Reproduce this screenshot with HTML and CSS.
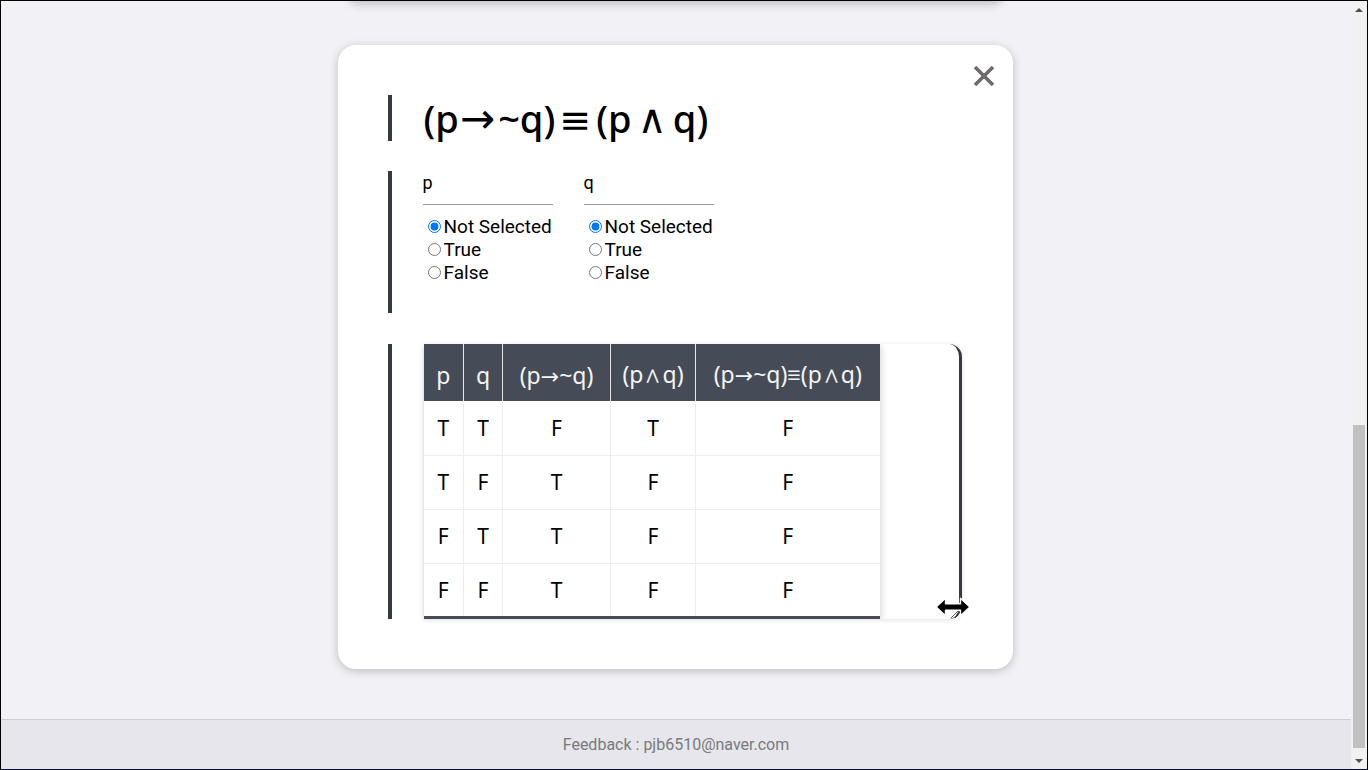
FILE: index.html
```html
<!DOCTYPE html>
<html lang="ko">
<head>
<meta charset="utf-8">
<title>Truth table</title>
<link rel="stylesheet" href="styles.css">
</head>
<body>
<div class="frame">
  <main class="page">
    <div class="prev-card"></div>
    <section class="card">
      <button class="close" aria-label="close">
        <svg width="22" height="22" viewBox="0 0 22 22"><path d="M2 2 L20 20 M20 2 L2 20" stroke="#6f6b6b" stroke-width="3.6" stroke-linecap="butt"/></svg>
      </button>
      <div class="block heading-block">
        <h1 class="formula">(p<span class="sym arrow">→</span>~q)<span class="sym equiv">≡</span>(p<span class="sym and">∧</span>q)</h1>
      </div>
      <div class="block vars">
        <div class="var">
          <div class="var-name">p</div>
          <div class="opts">
            <label class="opt"><input type="radio" name="p" checked>Not Selected</label>
            <label class="opt"><input type="radio" name="p">True</label>
            <label class="opt"><input type="radio" name="p">False</label>
          </div>
        </div>
        <div class="var">
          <div class="var-name">q</div>
          <div class="opts">
            <label class="opt"><input type="radio" name="q" checked>Not Selected</label>
            <label class="opt"><input type="radio" name="q">True</label>
            <label class="opt"><input type="radio" name="q">False</label>
          </div>
        </div>
      </div>
      <div class="block table-block">
        <div class="table-wrap">
          <table class="truth">
            <thead>
              <tr><th>p</th><th>q</th><th>(p<span class="hsym">→</span>~q)</th><th>(p∧q)</th><th>(p<span class="hsym">→</span>~q)≡(p∧q)</th></tr>
            </thead>
            <tbody>
              <tr><td>T</td><td>T</td><td>F</td><td>T</td><td>F</td></tr>
              <tr><td>T</td><td>F</td><td>T</td><td>F</td><td>F</td></tr>
              <tr><td>F</td><td>T</td><td>T</td><td>F</td><td>F</td></tr>
              <tr><td>F</td><td>F</td><td>T</td><td>F</td><td>F</td></tr>
            </tbody>
          </table>
        </div>
        <svg class="cursor" width="36" height="20" viewBox="0 0 36 20">
          <path d="M1.2 10 L10.5 1.2 L10.5 6.8 L25.5 6.8 L25.5 1.2 L34.8 10 L25.5 18.8 L25.5 13.2 L10.5 13.2 L10.5 18.8 Z" fill="#000" stroke="#fff" stroke-width="1.4" stroke-linejoin="round"/>
        </svg>
      </div>
    </section>
    <footer class="footer">Feedback : pjb6510@naver.com</footer>
  </main>
  <div class="scrollbar">
    <div class="sb-btn"><span class="tri up"></span></div>
    <div class="sb-track"><div class="sb-thumb"></div></div>
    <div class="sb-btn"><span class="tri down"></span></div>
  </div>
</div>
</body>
</html>
```

FILE: styles.css
```css
* { box-sizing: border-box; }
html, body { margin: 0; padding: 0; }
body { background: #f1f1f6; overflow: hidden; }

.frame {
  width: 1368px;
  height: 770px;
  border: 1px solid #000;
  border-bottom-color: #0b0b40;
  display: flex;
  overflow: hidden;
}

.page {
  width: 1350px;
  display: flex;
  flex-direction: column;
  align-items: center;
  background: #f1f1f6;
  font-family: Roboto, "Noto Sans", sans-serif;
}

.prev-card {
  width: 655px;
  height: 10px;
  margin-top: -10px;
  margin-right: 2px;
  background: #fff;
  border-radius: 0 0 18px 18px;
  box-shadow: 0 3px 10px rgba(0,0,0,0.22);
  flex: none;
}

.card {
  position: relative;
  width: 675px;
  margin-top: 44px;
  margin-right: 2px;
  background: #fff;
  border-radius: 18px;
  box-shadow: 0 2px 10px rgba(0,0,0,0.22);
  padding: 50px 50px 50px 50px;
  display: flex;
  flex-direction: column;
  gap: 30px;
  flex: none;
}

.close {
  position: absolute;
  top: 20px;
  right: 18px;
  width: 22px;
  height: 22px;
  padding: 0;
  border: 0;
  background: none;
  display: flex;
}

.block {
  border-left: 4px solid #343a40;
  padding-left: 31px;
}

.heading-block { height: 46px; }

.formula {
  margin: 0 0 0 1px;
  font-family: "Noto Sans", "Open Sans", sans-serif;
  font-weight: 500;
  font-size: 38px;
  line-height: 46px;
  color: #000;
  white-space: nowrap;
}

.sym {
  font-family: "DejaVu Sans", sans-serif;
  font-weight: 400;
}

.sym.arrow { font-size: 42px; margin: 0 3px 0 1px; }
.sym.equiv { margin: 0 5px 0 4px; }
.sym.and { margin: 0 6px 0 6px; font-size: 40px; }

.vars {
  display: flex;
  gap: 31px;
  padding-bottom: 29px;
}

.var { width: 130px; }

.var-name {
  font-size: 18px;
  line-height: 24px;
  padding-bottom: 9px;
  border-bottom: 1px solid #9a9a9a;
  color: #000;
}

.opts { margin-top: 10px; }

.opt {
  display: flex;
  align-items: center;
  height: 23px;
  font-size: 19px;
  color: #000;
  white-space: nowrap;
}

.opt input {
  margin: 0 3px 0 5px;
  width: 13px;
  height: 13px;
}

.table-block {
  position: relative;
  margin-top: 1px;
}

.table-wrap {
  width: 539px;
  background: #fff;
  border-right: 3px solid #343a40;
  border-radius: 0 13px 13px 0;
  box-shadow: 0 1px 5px rgba(0,0,0,0.12);
  overflow: hidden;
  resize: horizontal;
}

.truth {
  border-collapse: collapse;
  font-family: "Noto Sans", "Open Sans", sans-serif;
  font-size: 21px;
  box-shadow: 0 2px 8px rgba(0,0,0,0.22);
  border-bottom: 3px solid #464c57;
  margin-left: 1px;
}

.truth th {
  background: #464c57;
  color: #f4f4f4;
  font-weight: 400;
  font-size: 23px;
  height: 57px;
  padding: 4px 6px 0;
  border-left: 1px solid #e6e6e6;
  white-space: nowrap;
}

.hsym {
  font-family: "DejaVu Sans", sans-serif;
  font-size: 22px;
}

.truth th:first-child { border-left: 0; }

.truth td {
  height: 54px;
  padding: 0 12px;
  text-align: center;
  color: #000;
  border: 1px solid #ececec;
}

.truth tr td:first-child { border-left: 0; }
.truth tr td:last-child { border-right: 0; }
.truth tbody tr:first-child td { border-top: 0; }

.truth th:nth-child(1), .truth td:nth-child(1) { width: 40px; }
.truth th:nth-child(2), .truth td:nth-child(2) { width: 39px; }
.truth th:nth-child(3), .truth td:nth-child(3) { width: 108px; }
.truth th:nth-child(4), .truth td:nth-child(4) { width: 85px; }
.truth th:nth-child(5), .truth td:nth-child(5) { width: 184px; }

.cursor {
  position: absolute;
  left: 543px;
  top: 253px;
}

.footer {
  margin-top: auto;
  width: 100%;
  height: 50px;
  border-top: 1px solid #cfcfd4;
  background: #e6e6ec;
  color: #7a7a7a;
  font-size: 16px;
  display: flex;
  align-items: center;
  justify-content: center;
}

.scrollbar {
  width: 16px;
  background: #f1f1f1;
  display: flex;
  flex-direction: column;
}

.sb-btn {
  height: 17px;
  display: flex;
  align-items: center;
  justify-content: center;
  flex: none;
}

.tri {
  width: 0;
  height: 0;
  border-left: 4px solid transparent;
  border-right: 4px solid transparent;
}
.tri.up { border-bottom: 4px solid #505050; }
.tri.down { border-top: 4px solid #505050; }

.sb-track {
  flex: 1;
  padding: 407px 2px 4px 2px;
  display: flex;
}

.sb-thumb {
  flex: 1;
  background: #c1c1c1;
}
```
